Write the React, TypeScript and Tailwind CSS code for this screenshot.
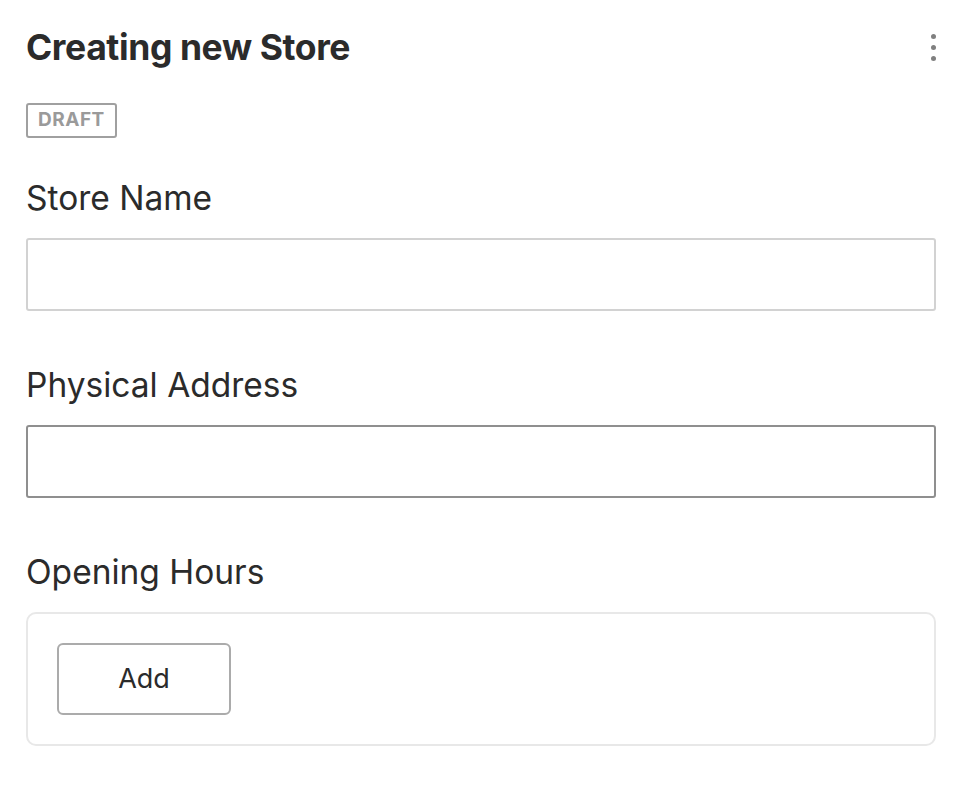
import React from 'react';

const Label: React.FC<{ children: React.ReactNode }> = ({ children }) => (
  <label className="block text-[33.5px] leading-[36px] text-[#2b2b2b]">{children}</label>
);

export default function App() {
  return (
    <div className="min-h-screen bg-white pl-[26px] pr-[24px] pt-[26px] font-['Inter','Liberation_Sans',sans-serif] text-[#2b2b2b]">
      {/* Header */}
      <div className="flex items-start justify-between">
        <h1 className="text-[35.5px] leading-[44px] font-bold tracking-[-0.4px]">Creating new Store</h1>
        <button className="mr-[-2px] mt-[8px] flex w-[10px] flex-col items-center gap-[6px]" aria-label="More">
          <span className="h-[5px] w-[5px] rounded-full bg-[#808080]" />
          <span className="h-[5px] w-[5px] rounded-full bg-[#808080]" />
          <span className="h-[5px] w-[5px] rounded-full bg-[#808080]" />
        </button>
      </div>

      <div className="mt-[33px]">
        <span className="inline-flex h-[35px] items-center rounded-[3px] border-2 border-[#a0a0a0] px-[10px] text-[19px] font-bold tracking-[0.5px] text-[#9a9a9a]">
          DRAFT
        </span>
      </div>

      {/* Store name */}
      <div className="mt-[42px]">
        <Label>Store Name</Label>
        <input className="mt-[22px] block h-[73px] w-full rounded-[3px] border-2 border-[#d2d2d2] bg-white outline-none" />
      </div>

      {/* Address */}
      <div className="mt-[56px]">
        <Label>Physical Address</Label>
        <input className="mt-[22px] block h-[73px] w-full rounded-[3px] border-2 border-[#8f8f8f] bg-white outline-none" />
      </div>

      {/* Opening hours */}
      <div className="mt-[56px]">
        <Label>Opening Hours</Label>
        <div className="mt-[22px] rounded-[10px] border-2 border-[#e8e8e8] px-[29px] py-[29px]">
          <button className="flex h-[72px] w-[174px] items-center justify-center rounded-[6px] border-2 border-[#ababab] bg-white text-[27px] text-[#2b2b2b]">
            Add
          </button>
        </div>
      </div>
    </div>
  );
}
